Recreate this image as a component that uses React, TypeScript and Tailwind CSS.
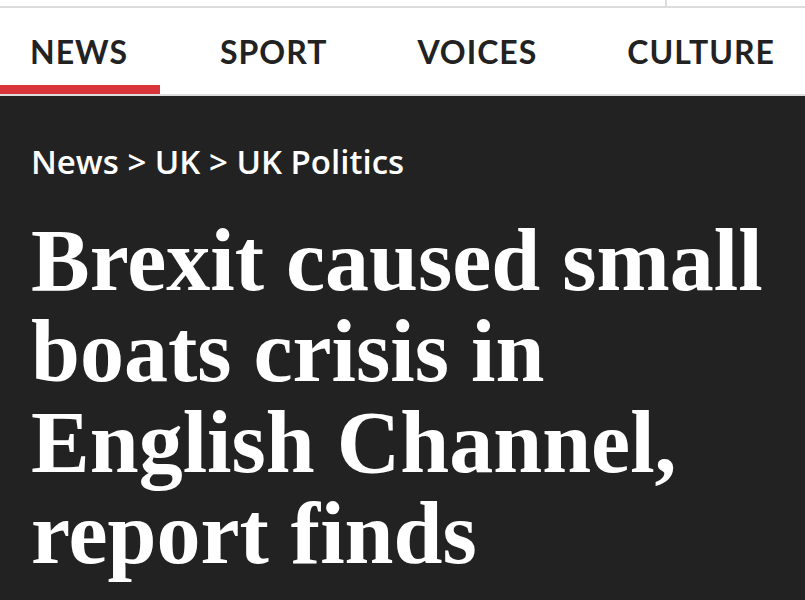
import React from "react"

const tabs = ["NEWS", "SPORT", "VOICES", "CULTURE"]

export default function App() {
  return (
    <div className="h-[600px] w-[805px] overflow-hidden bg-[#222222]">
      {/* top strip */}
      <div className="flex h-[6px] bg-white">
        <div className="w-[667px] border-r-2 border-[#dcdcdc]" />
      </div>
      <div className="h-[2px] bg-[#dcdcdc]" />
      <div className="h-px bg-white" />

      {/* section nav */}
      <nav className="flex h-[85px] gap-[30px] bg-white font-['Lato',sans-serif]">
        {tabs.map((t, i) => (
          <div
            key={t}
            className={
              i === 0
                ? "flex h-full flex-col border-b-[9px] border-[#d8353b] pl-[30px] pr-[32px] pt-[27px]"
                : "flex h-full flex-col border-b-[9px] border-transparent px-[30px] pt-[27px]"
            }
          >
            <span className="text-[32px] font-bold leading-none tracking-[1px] text-[#222222]">
              {t}
            </span>
          </div>
        ))}
      </nav>
      <div className="h-[2px] bg-[#dcdcdc]" />

      {/* article header */}
      <div className="px-[31px] pt-[49px]">
        <div className="font-['Open_Sans',sans-serif] text-[33px] font-semibold leading-none text-white">
          News &gt; UK &gt; UK Politics
        </div>
        <h1 className="mt-[37px] font-['Liberation_Serif',serif] text-[88px] font-bold leading-[91px] text-white">
          Brexit caused small boats crisis in English Channel, report finds
        </h1>
      </div>
    </div>
  )
}
